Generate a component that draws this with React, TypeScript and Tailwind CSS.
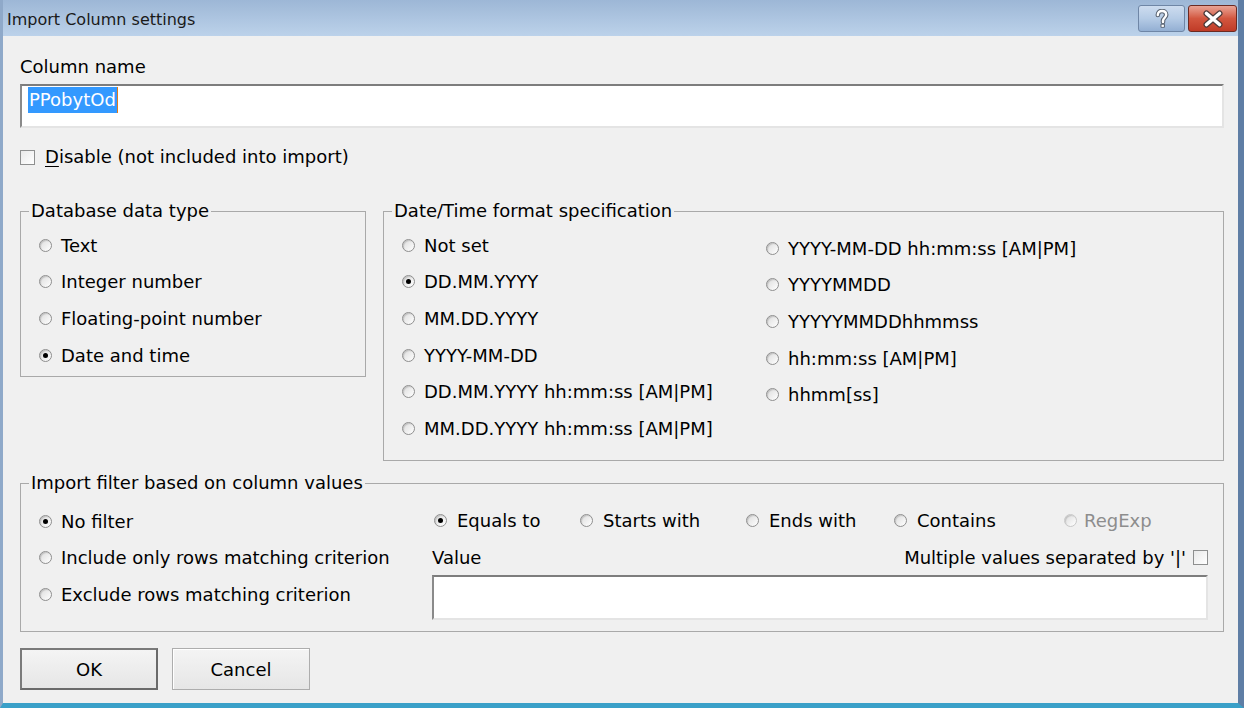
import React from "react";

function Radio({ checked = false, disabled = false }: { checked?: boolean; disabled?: boolean }) {
  return (
    <span
      className={`relative inline-flex w-[13px] h-[13px] shrink-0 items-center justify-center rounded-full border ${
        disabled ? "border-[#c8c8c8]" : "border-[#8f8f8f]"
      } bg-gradient-to-br from-[#dcdcdc] to-white shadow-[inset_1px_1px_1px_rgba(0,0,0,0.15)]`}
    >
      {checked && <span className="w-[5px] h-[5px] rounded-full bg-black" />}
    </span>
  );
}

function RadioRow({
  label,
  checked,
  disabled,
  className = "",
}: {
  label: string;
  checked?: boolean;
  disabled?: boolean;
  className?: string;
}) {
  return (
    <div className={`flex items-center h-[36.6px] ${className}`}>
      <Radio checked={checked} disabled={disabled} />
      <span className={`ml-[9px] whitespace-nowrap ${disabled ? "text-[#8d8d8d]" : "text-black"}`}>{label}</span>
    </div>
  );
}

function CheckBox() {
  return (
    <span className="inline-block w-[15px] h-[15px] shrink-0 border border-[#8e8f8f] bg-gradient-to-br from-[#e9e9e9] to-white" />
  );
}

function GroupBox({
  title,
  className = "",
  children,
}: {
  title: string;
  className?: string;
  children: React.ReactNode;
}) {
  return (
    <div className={`relative border border-[#a9a9a9] ${className}`}>
      <span className="absolute -top-[12px] left-[8px] px-[2px] leading-[22px] bg-[#f0f0f0] whitespace-nowrap">
        {title}
      </span>
      {children}
    </div>
  );
}

function TitleButton({ kind }: { kind: "help" | "close" }) {
  if (kind === "help") {
    return (
      <div className="w-[47px] h-[27px] rounded-[3px] border border-[#6f86a6] bg-gradient-to-b from-[#cddcef] via-[#b5cbe5] to-[#93afd3] flex items-center justify-center">
        <svg width="16" height="20" viewBox="0 0 16 20">
          <path
            d="M3.8 6C3.8 3.2 5.8 2 8 2s4.2 1.3 4.2 3.8c0 2.7-3.2 3.2-3.2 6V13"
            fill="none"
            stroke="#5a6472"
            strokeWidth="4.6"
            strokeLinecap="round"
          />
          <path
            d="M3.8 6C3.8 3.2 5.8 2 8 2s4.2 1.3 4.2 3.8c0 2.7-3.2 3.2-3.2 6V13"
            fill="none"
            stroke="#ffffff"
            strokeWidth="2.4"
            strokeLinecap="round"
          />
          <rect x="6.5" y="14.8" width="4.4" height="4" rx="0.8" fill="#5a6472" />
          <rect x="7.5" y="15.7" width="2.4" height="2.2" fill="#ffffff" />
        </svg>
      </div>
    );
  }
  return (
    <div className="w-[49px] h-[27px] rounded-[3px] border border-[#6b2a22] bg-gradient-to-b from-[#e8a395] via-[#d2563f] to-[#c03b27] flex items-center justify-center">
      <svg width="24" height="18" viewBox="0 0 24 18">
        <path d="M5.5 3.5L18.5 14.5M18.5 3.5L5.5 14.5" stroke="#4a3a3a" strokeWidth="6" strokeLinecap="round" />
        <path d="M5.5 3.5L18.5 14.5M18.5 3.5L5.5 14.5" stroke="#ffffff" strokeWidth="3.6" strokeLinecap="round" />
      </svg>
    </div>
  );
}

export default function App() {
  return (
    <div
      className="w-[1244px] h-[708px] flex flex-col bg-[#c2d5ec] border-l-[3px] border-r-[6px] border-b-[5px] border-l-[#8fa9c9] border-r-[#5f7ea5] border-b-[#3aa0c8] text-[18px] text-black overflow-hidden"
      style={{ fontFamily: '"DejaVu Sans", Verdana, sans-serif' }}
    >
      {/* Title bar */}
      <div className="h-[36px] shrink-0 flex items-center justify-between bg-gradient-to-b from-[#9db7d6] to-[#bcd2ea] pl-[4px] pr-[1px]">
        <span className="text-[16px] text-[#1a1a1a] mt-[4px]">Import Column settings</span>
        <div className="flex gap-[3px] self-start mt-[5px]">
          <TitleButton kind="help" />
          <TitleButton kind="close" />
        </div>
      </div>

      {/* Body */}
      <div className="flex-1 bg-[#f0f0f0] pl-[17px] pr-[14px] pt-[20px] flex flex-col">
        <div className="leading-[22px] h-[22px]">Column name</div>
        <div className="mt-[6px] h-[44px] bg-white border-[2px] border-t-[#7d7d7d] border-l-[#8a8a8a] border-r-[#e4e4e4] border-b-[#e4e4e4] flex items-start pl-[6px] pt-[1px]">
          <span className="bg-[#3399ff] text-white leading-[26px] h-[26px] px-[1px] border-r border-[#e07a1a]">PPobytOd</span>
        </div>

        <div className="mt-[18px] h-[22px] flex items-center">
          <CheckBox />
          <span className="ml-[10px] leading-[22px]">
            <span className="underline underline-offset-[3px]">D</span>isable (not included into import)
          </span>
        </div>

        {/* Type + format groups */}
        <div className="mt-[43px] flex items-start gap-[17px]">
          <GroupBox title="Database data type" className="w-[346px] h-[166px] pl-[18px] pt-[15px]">
            <RadioRow label="Text" />
            <RadioRow label="Integer number" />
            <RadioRow label="Floating-point number" />
            <RadioRow label="Date and time" checked />
          </GroupBox>

          <GroupBox title="Date/Time format specification" className="w-[841px] h-[250px] pl-[18px] pt-[15px] flex">
            <div className="w-[364px]">
              <RadioRow label="Not set" />
              <RadioRow label="DD.MM.YYYY" checked />
              <RadioRow label="MM.DD.YYYY" />
              <RadioRow label="YYYY-MM-DD" />
              <RadioRow label="DD.MM.YYYY hh:mm:ss [AM|PM]" />
              <RadioRow label="MM.DD.YYYY hh:mm:ss [AM|PM]" />
            </div>
            <div className="pt-[3px]">
              <RadioRow label="YYYY-MM-DD hh:mm:ss [AM|PM]" />
              <RadioRow label="YYYYMMDD" />
              <RadioRow label="YYYYYMMDDhhmmss" />
              <RadioRow label="hh:mm:ss [AM|PM]" />
              <RadioRow label="hhmm[ss]" />
            </div>
          </GroupBox>
        </div>

        {/* Filter group */}
        <GroupBox title="Import filter based on column values" className="mt-[22px] w-[1204px] h-[149px] flex">
          <div className="w-[411px] pl-[18px] pt-[19px]">
            <RadioRow label="No filter" checked />
            <RadioRow label="Include only rows matching criterion" />
            <RadioRow label="Exclude rows matching criterion" />
          </div>
          <div className="w-[776px] pt-[18px]">
            <div className="flex items-center h-[36px]">
              <div className="w-[148px] flex items-center">
                <span className="ml-[2px] flex"><Radio checked /></span>
                <span className="ml-[10px]">Equals to</span>
              </div>
              <div className="w-[166px] flex items-center">
                <Radio />
                <span className="ml-[10px]">Starts with</span>
              </div>
              <div className="w-[148px] flex items-center">
                <Radio />
                <span className="ml-[10px]">Ends with</span>
              </div>
              <div className="w-[170px] flex items-center">
                <Radio />
                <span className="ml-[10px]">Contains</span>
              </div>
              <div className="flex items-center">
                <Radio disabled />
                <span className="ml-[7px] text-[#8d8d8d]">RegExp</span>
              </div>
            </div>
            <div className="flex items-center justify-between h-[38px]">
              <span>Value</span>
              <div className="flex items-center">
                <span>Multiple values separated by '|'</span>
                <span className="ml-[7px] flex"><CheckBox /></span>
              </div>
            </div>
            <div className="mt-[-1px] h-[45px] bg-white border-[2px] border-t-[#7d7d7d] border-l-[#8a8a8a] border-r-[#e4e4e4] border-b-[#e4e4e4]" />
          </div>
        </GroupBox>

        {/* Buttons */}
        <div className="mt-[16px] flex gap-[14px]">
          <button className="w-[138px] h-[42px] border-[2px] border-[#7a7a7a] border-r-[#6a6a6a] border-b-[#6a6a6a] bg-gradient-to-b from-[#f4f4f4] to-[#e6e6e6] text-[18px]">
            OK
          </button>
          <button className="w-[138px] h-[42px] border border-[#adadad] bg-gradient-to-b from-[#f4f4f4] to-[#e6e6e6] shadow-[inset_1px_1px_0_#ffffff] text-[18px]">
            Cancel
          </button>
        </div>
      </div>
    </div>
  );
}
